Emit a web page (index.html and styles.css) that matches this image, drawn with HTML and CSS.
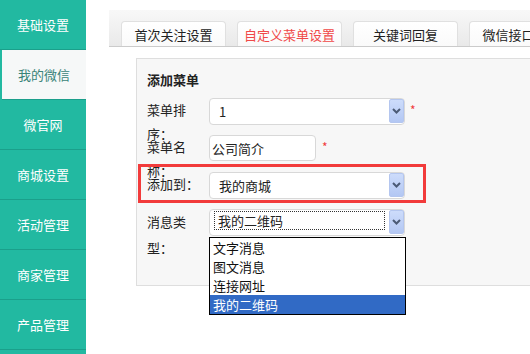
FILE: index.html
```html
<!DOCTYPE html>
<html lang="zh-CN">
<head>
    <meta charset="UTF-8">
    <title>自定义菜单设置</title>
    <link rel="stylesheet" href="styles.css">
</head>
<body>
    <div class="sidebar">
        <div class="side-item">基础设置</div>
        <div class="side-item active">我的微信</div>
        <div class="side-item">微官网</div>
        <div class="side-item">商城设置</div>
        <div class="side-item">活动管理</div>
        <div class="side-item">商家管理</div>
        <div class="side-item">产品管理</div>
    </div>

    <div class="main">
        <div class="tabs">
            <div class="tab">首次关注设置</div>
            <div class="tab current">自定义菜单设置</div>
            <div class="tab">关键词回复</div>
            <div class="tab">微信接口设置</div>
        </div>

        <div class="panel">
            <h3>添加菜单</h3>

            <div class="row">
                <label>菜单排序：</label>
                <div class="select wide">
                    <span class="value">1</span>
                    <span class="arrow"><svg width="9" height="6" viewBox="0 0 9 6"><path d="M1 1 L4.5 4.5 L8 1" fill="none" stroke="#4b5a76" stroke-width="2"/></svg></span>
                </div>
                <span class="req">*</span>
            </div>

            <div class="row">
                <label>菜单名称：</label>
                <input class="text" type="text" value="公司简介">
                <span class="req">*</span>
            </div>

            <div class="row marked">
                <label>添加到：</label>
                <div class="select wide">
                    <span class="value">我的商城</span>
                    <span class="arrow"><svg width="9" height="6" viewBox="0 0 9 6"><path d="M1 1 L4.5 4.5 L8 1" fill="none" stroke="#4b5a76" stroke-width="2"/></svg></span>
                </div>
                <div class="mark-box"></div>
            </div>

            <div class="row">
                <label class="tall">消息类型：</label>
                <div class="select wide open">
                    <span class="value focus">我的二维码</span>
                    <span class="arrow"><svg width="9" height="6" viewBox="0 0 9 6"><path d="M1 1 L4.5 4.5 L8 1" fill="none" stroke="#4b5a76" stroke-width="2"/></svg></span>
                    <ul class="options">
                        <li>文字消息</li>
                        <li>图文消息</li>
                        <li>连接网址</li>
                        <li class="selected">我的二维码</li>
                    </ul>
                </div>
            </div>
        </div>
    </div>
</body>
</html>
```

FILE: styles.css
```css
body {
    margin: 0;
    display: flex;
    height: 354px;
    overflow: hidden;
    background: #fff;
    font-family: "Noto Sans CJK SC", "Microsoft YaHei", sans-serif;
    font-size: 13px;
    color: #333;
}

.sidebar {
    width: 86px;
    flex-shrink: 0;
    background: #22b9a1;
}

.side-item {
    height: 49px;
    line-height: 49px;
    text-align: center;
    color: #fff;
    border-bottom: 1px solid #1b9f8b;
}

.side-item.active {
    margin-left: 2px;
    background: #f6f8f8;
    color: #3a8478;
}

.main {
    flex: 1;
    min-width: 0;
    padding: 10px 0 0 23px;
    overflow: hidden;
}

.tabs {
    display: flex;
    gap: 11px;
    height: 25px;
    padding: 11px 0 0 12px;
    background: linear-gradient(#f8f8f8, #e9e9e9);
    border-bottom: 1px solid #cbcbcb;
    white-space: nowrap;
    overflow: hidden;
}

.tab {
    width: 105px;
    flex-shrink: 0;
    box-sizing: border-box;
    height: 25px;
    line-height: 25px;
    text-align: center;
    background: linear-gradient(#fff, #fafafa);
    border: 1px solid #e0e0e0;
    border-bottom: none;
    border-radius: 4px 4px 0 0;
    color: #222;
}

.tab.current {
    color: #f04848;
}

.panel {
    margin: 11px 0 0 27px;
    width: 420px;
    padding: 11px 10px 39px;
    background: #f7f7f7;
    border: 1px solid #dedede;
}

.panel h3 {
    margin: 0 0 8px;
    font-size: 13px;
    line-height: 20px;
    color: #222;
}

.row {
    position: relative;
    display: flex;
    align-items: flex-start;
    height: 37px;
}

.row label {
    width: 56px;
    margin-right: 6px;
    line-height: 24px;
    color: #222;
}

.row label.tall {
    line-height: 26px;
}

.select {
    position: relative;
    box-sizing: border-box;
    height: 27px;
    background: #fff;
    border: 1px solid #d8d8d8;
    border-radius: 4px;
}

.select.wide {
    width: 196px;
}

.select .value {
    display: block;
    padding-left: 9px;
    line-height: 25px;
    color: #222;
}

.select .value.focus {
    position: absolute;
    left: 5px;
    top: 2px;
    width: 166px;
    padding-left: 3px;
    line-height: 17px;
    outline: 1px dotted #333;
}

.arrow {
    position: absolute;
    right: 0;
    top: 0;
    width: 15px;
    height: 24px;
    display: flex;
    align-items: center;
    justify-content: center;
    background: linear-gradient(#cddcfb, #b3c7f3);
    border: 1px solid #b4c6ef;
    border-radius: 2px;
    box-sizing: border-box;
}

.req {
    margin-left: 5px;
    color: #f03c3c;
    font-size: 12px;
    line-height: 24px;
}

.text {
    box-sizing: border-box;
    width: 107px;
    height: 26px;
    padding: 0 2px;
    border: 1px solid #d8d8d8;
    border-radius: 4px;
    font: inherit;
    color: #222;
}

.text + .req {
    margin-left: 6px;
}

.mark-box {
    position: absolute;
    left: -9px;
    top: -8px;
    width: 282px;
    height: 33px;
    border: 3px solid #f23b3b;
}

.options {
    position: absolute;
    left: -1px;
    top: 27px;
    width: 195px;
    margin: 0;
    padding: 0;
    list-style: none;
    background: #fff;
    border: 1px solid #000;
    z-index: 2;
}

.options li {
    height: 19px;
    line-height: 19px;
    padding-left: 3px;
    color: #111;
}

.options li.selected {
    background: #316ac5;
    color: #fff;
}
```
